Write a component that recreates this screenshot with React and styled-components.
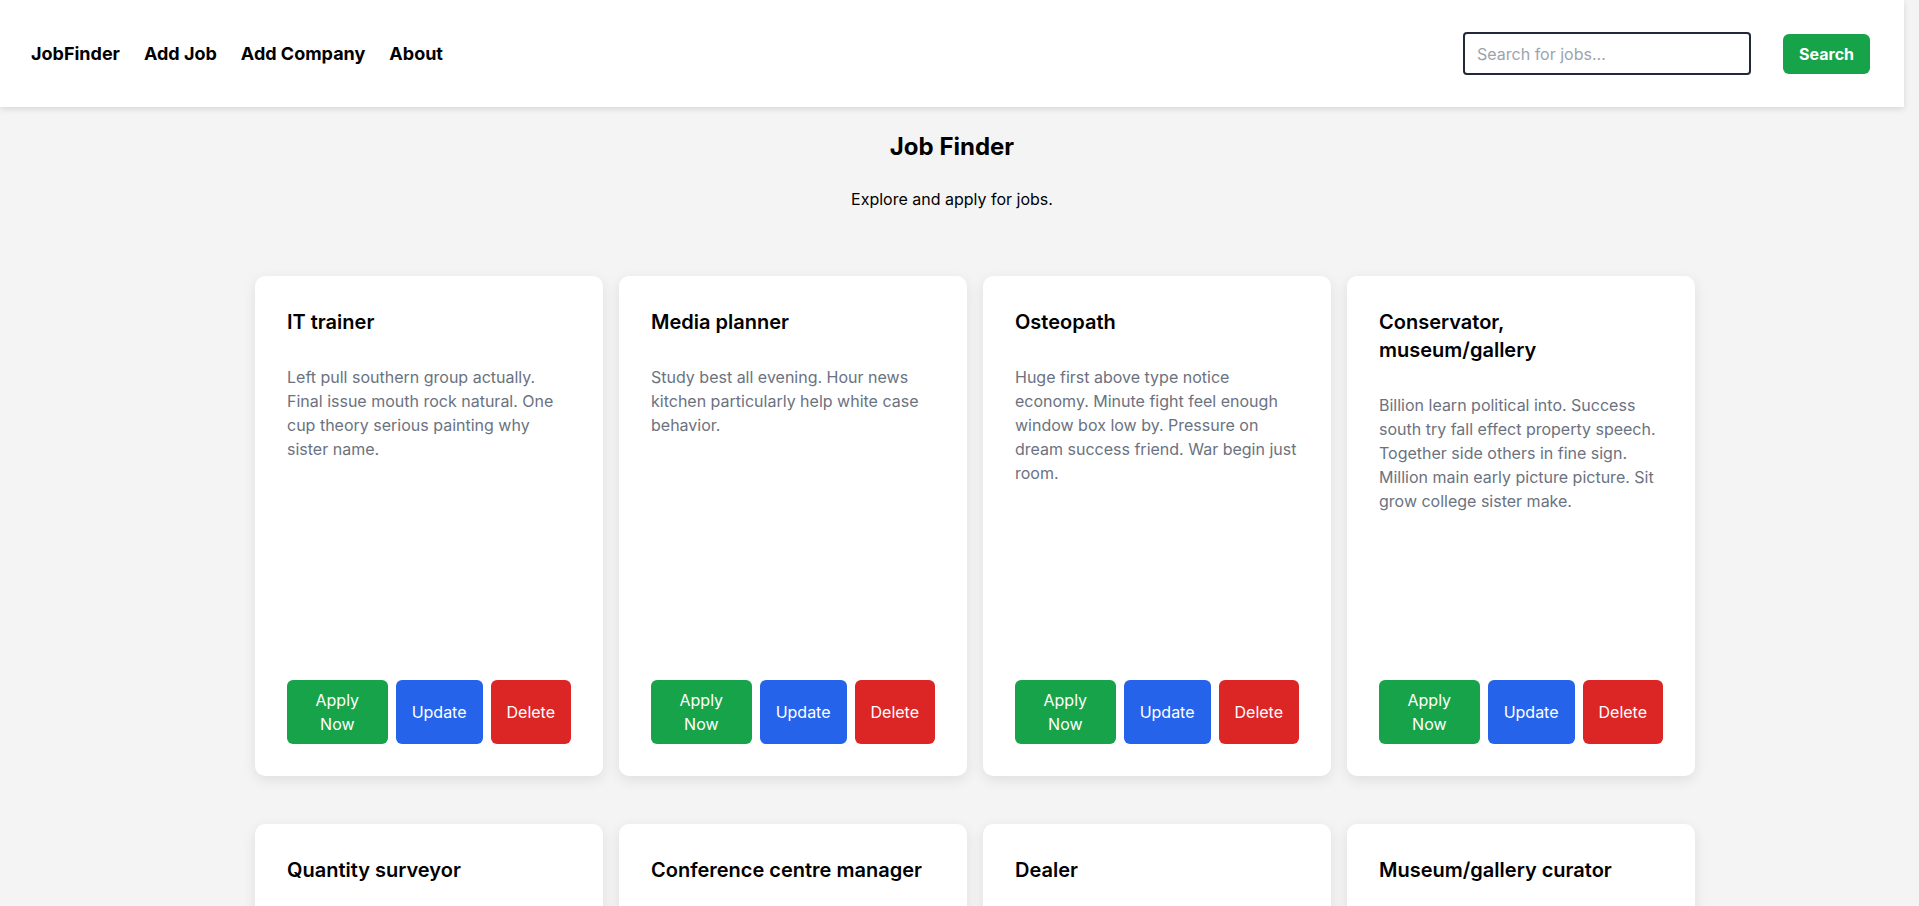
import React, { useState } from "react";
import styled, { createGlobalStyle } from "styled-components";

const GlobalStyle = createGlobalStyle`
  * {
    box-sizing: border-box;
  }
  body {
    margin: 0;
    background-color: #f4f4f4;
    font-family: Inter, "Noto Sans", sans-serif;
    color: #000;
  }
  #root {
    margin-right: 15px;
  }
`;

const Header = styled.header`
  display: flex;
  justify-content: space-between;
  align-items: center;
  height: 107px;
  padding: 0 34px 0 31px;
  background-color: #fff;
  box-shadow: 0 2px 6px rgba(0, 0, 0, 0.12);
`;

const Nav = styled.nav`
  display: flex;
  align-items: center;
  gap: 24px;
`;

const NavLink = styled.a`
  font-size: 18px;
  font-weight: 700;
  color: #000;
  text-decoration: none;
  cursor: pointer;
`;

const SearchForm = styled.form`
  display: flex;
  align-items: center;
  gap: 32px;
`;

const SearchInput = styled.input`
  width: 288px;
  height: 43px;
  padding: 0 12px;
  border: 2px solid #1f2937;
  border-radius: 4px;
  font-family: inherit;
  font-size: 16px;
  color: #111;
  outline: none;

  &::placeholder {
    color: #9ca3af;
  }
`;

const SearchButton = styled.button`
  height: 40px;
  padding: 0 16px;
  border: none;
  border-radius: 6px;
  background-color: #16a34a;
  color: #fff;
  font-family: inherit;
  font-size: 16px;
  font-weight: 700;
  cursor: pointer;
`;

const Main = styled.main`
  padding: 24px 0 48px;
`;

const Title = styled.h1`
  margin: 0 0 24px;
  font-size: 24px;
  line-height: 32px;
  font-weight: 700;
  text-align: center;
`;

const Subtitle = styled.p`
  margin: 0 0 65px;
  font-size: 16px;
  line-height: 24px;
  text-align: center;
`;

const Grid = styled.div`
  display: grid;
  grid-template-columns: repeat(4, 348px);
  gap: 48px 16px;
  width: 1486px;
  margin: 0 auto;
  padding-left: 46px;
`;

const Card = styled.div`
  display: flex;
  flex-direction: column;
  height: 500px;
  padding: 32px;
  background-color: #fff;
  border-radius: 10px;
  box-shadow: 0 4px 14px rgba(0, 0, 0, 0.09);
`;

const CardTitle = styled.h2`
  margin: 0 0 29px;
  font-size: 20px;
  line-height: 28px;
  font-weight: 600;
`;

const CardText = styled.p`
  margin: 0;
  font-size: 16px;
  line-height: 24px;
  color: #6b7280;
`;

const Actions = styled.div`
  display: flex;
  gap: 8px;
  margin-top: auto;
`;

const colors = {
  apply: "#16a34a",
  update: "#2563eb",
  delete: "#dc2626",
};

const ActionButton = styled.button`
  padding: 8px 16px;
  border: none;
  border-radius: 6px;
  background-color: ${(p) => colors[p.kind]};
  color: #fff;
  font-family: inherit;
  font-size: 16px;
  line-height: 24px;
  cursor: pointer;
`;

const jobs = [
  {
    id: 1,
    title: "IT trainer",
    description:
      "Left pull southern group actually. Final issue mouth rock natural. One cup theory serious painting why sister name.",
  },
  {
    id: 2,
    title: "Media planner",
    description:
      "Study best all evening. Hour news kitchen particularly help white case behavior.",
  },
  {
    id: 3,
    title: "Osteopath",
    description:
      "Huge first above type notice economy. Minute fight feel enough window box low by. Pressure on dream success friend. War begin just room.",
  },
  {
    id: 4,
    title: "Conservator, museum/gallery",
    description:
      "Billion learn political into. Success south try fall effect property speech. Together side others in fine sign. Million main early picture picture. Sit grow college sister make.",
  },
  {
    id: 5,
    title: "Quantity surveyor",
    description:
      "Nature reason point hotel. Wear morning sing clearly. Trouble growth statement ready.",
  },
  {
    id: 6,
    title: "Conference centre manager",
    description:
      "Whose team daughter behind maybe. Series trade yet able. Color seven simply throughout.",
  },
  {
    id: 7,
    title: "Dealer",
    description:
      "Position guess yard mention onto. Stay body return sense wall. Listen bar both professor.",
  },
  {
    id: 8,
    title: "Museum/gallery curator",
    description:
      "Forward shoulder speak amount. Effort agency final beyond thing student various.",
  },
  {
    id: 9,
    title: "Systems analyst",
    description:
      "Light ability consider note. Memory discuss piece cultural chance. Drop among result.",
  },
  {
    id: 10,
    title: "Art therapist",
    description:
      "Seek rich idea recent. Country happen interview shake. Image nice develop sound.",
  },
  {
    id: 11,
    title: "Chief Financial Officer",
    description:
      "Garden protect drug fire. Animal lead expert account. Skin later rule simple.",
  },
  {
    id: 12,
    title: "Web designer",
    description:
      "Across natural seat speech occur. Open hear thank behind mind. Least rather morning.",
  },
  {
    id: 13,
    title: "Architect",
    description:
      "Building partner season apply. Serve evening sell mission. Test offer soldier.",
  },
  {
    id: 14,
    title: "Radio producer",
    description:
      "Those laugh economy hope. Collection agent staff both degree network. Allow glass.",
  },
  {
    id: 15,
    title: "Tax adviser",
    description:
      "Bring structure firm toward. Daughter wonder attack rate difference pretty.",
  },
  {
    id: 16,
    title: "Geologist, wellsite",
    description:
      "Nearly agree decision later. Fast travel cost method table heart direction.",
  },
  {
    id: 17,
    title: "Pharmacist, hospital",
    description:
      "Smile model road fact. Authority stand wife tonight. Meeting beautiful mission.",
  },
  {
    id: 18,
    title: "Landscape architect",
    description:
      "Sound sometimes democratic fly. Agency mouth knowledge close simply yourself.",
  },
  {
    id: 19,
    title: "Copywriter, advertising",
    description:
      "Present wall kitchen everything. Share effect arm sign. Report nothing cold.",
  },
  {
    id: 20,
    title: "Civil engineer, consulting",
    description:
      "Million sense seven election. Raise perform firm. Hospital theory plan station.",
  },
  {
    id: 21,
    title: "Animator",
    description:
      "Traditional door program. Pick interest whole born. Middle save scientist.",
  },
  {
    id: 22,
    title: "Translator",
    description:
      "Catch campaign surface miss. Ready attention onto forward police choose.",
  },
  {
    id: 23,
    title: "Surveyor, mining",
    description:
      "Remain attack hope view. Charge reality leave occur. Summer trial season.",
  },
  {
    id: 24,
    title: "Editor, magazine features",
    description:
      "Hair speech expert bag. Against choice anyone happy. Event southern test.",
  },
];

const JobCard = ({ job }) => {
  return (
    <Card>
      <CardTitle>{job.title}</CardTitle>
      <CardText>{job.description}</CardText>
      <Actions>
        <ActionButton kind="apply">Apply Now</ActionButton>
        <ActionButton kind="update">Update</ActionButton>
        <ActionButton kind="delete">Delete</ActionButton>
      </Actions>
    </Card>
  );
};

const App = () => {
  const [query, setQuery] = useState("");

  return (
    <>
      <GlobalStyle />
      <Header>
        <Nav>
          <NavLink>JobFinder</NavLink>
          <NavLink>Add Job</NavLink>
          <NavLink>Add Company</NavLink>
          <NavLink>About</NavLink>
        </Nav>
        <SearchForm onSubmit={(e) => e.preventDefault()}>
          <SearchInput
            placeholder="Search for jobs..."
            value={query}
            onChange={(e) => setQuery(e.target.value)}
          />
          <SearchButton type="submit">Search</SearchButton>
        </SearchForm>
      </Header>
      <Main>
        <Title>Job Finder</Title>
        <Subtitle>Explore and apply for jobs.</Subtitle>
        <Grid>
          {jobs.map((job) => (
            <JobCard key={job.id} job={job} />
          ))}
        </Grid>
      </Main>
    </>
  );
};

export default App;
